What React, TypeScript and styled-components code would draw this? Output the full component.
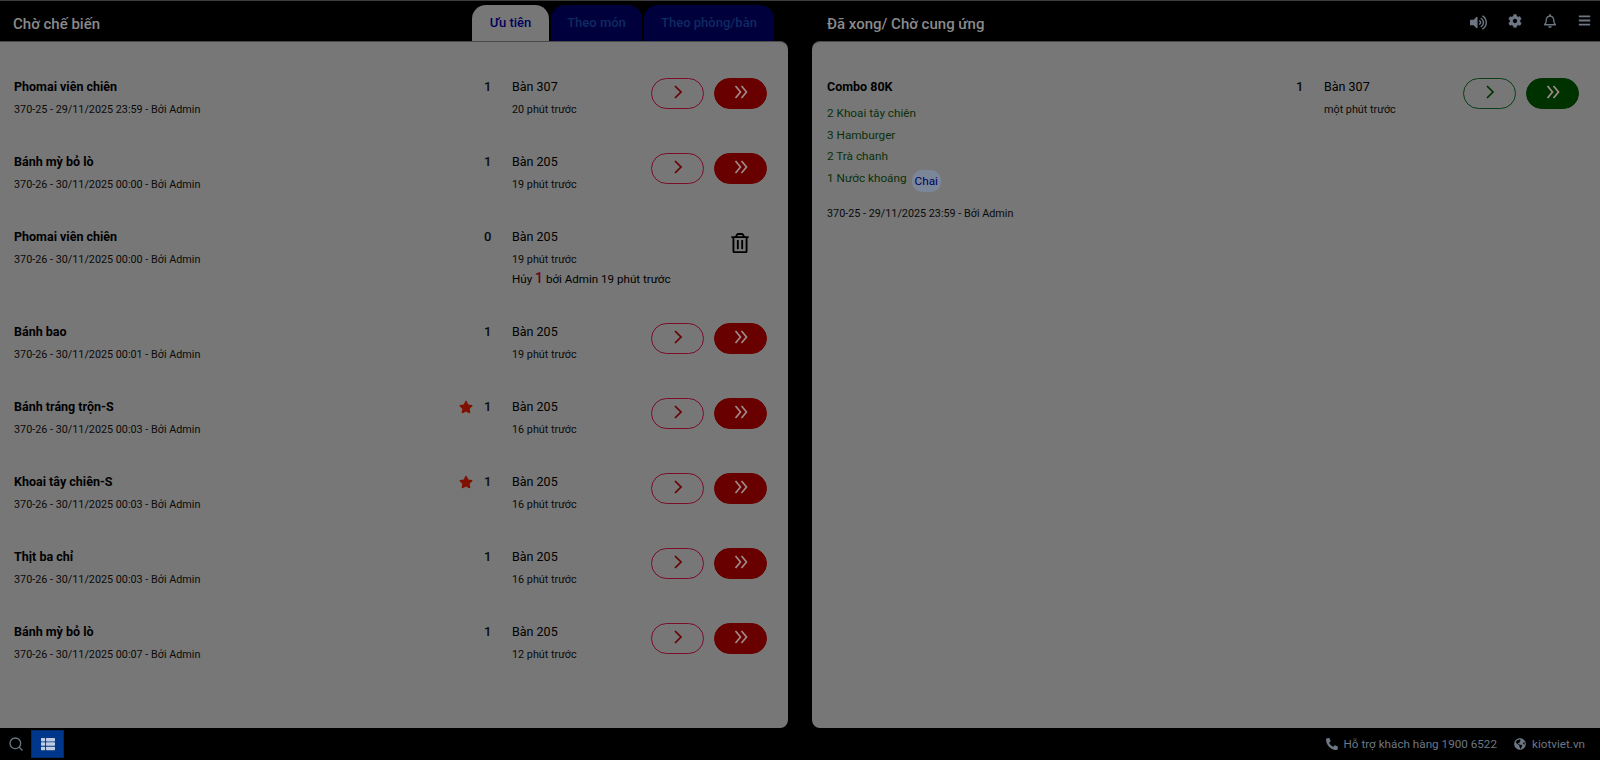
import React from 'react';
import styled, { createGlobalStyle } from 'styled-components';
import { FaVolumeUp, FaCog, FaRegBell, FaBars, FaPhoneAlt, FaGlobeAmericas, FaStar, FaRegTrashAlt, FaThList } from 'react-icons/fa';
import { FiSearch } from 'react-icons/fi';

type Item = {
  name: string;
  meta: string;
  qty: number;
  table: string;
  time: string;
  star?: boolean;
  cancelled?: boolean;
};

const items: Item[] = [
  { name: 'Phomai viên chiên', meta: '370-25 - 29/11/2025 23:59 - Bởi Admin', qty: 1, table: 'Bàn 307', time: '20 phút trước' },
  { name: 'Bánh mỳ bỏ lò', meta: '370-26 - 30/11/2025 00:00 - Bởi Admin', qty: 1, table: 'Bàn 205', time: '19 phút trước' },
  { name: 'Phomai viên chiên', meta: '370-26 - 30/11/2025 00:00 - Bởi Admin', qty: 0, table: 'Bàn 205', time: '19 phút trước', cancelled: true },
  { name: 'Bánh bao', meta: '370-26 - 30/11/2025 00:01 - Bởi Admin', qty: 1, table: 'Bàn 205', time: '19 phút trước' },
  { name: 'Bánh tráng trộn-S', meta: '370-26 - 30/11/2025 00:03 - Bởi Admin', qty: 1, table: 'Bàn 205', time: '16 phút trước', star: true },
  { name: 'Khoai tây chiên-S', meta: '370-26 - 30/11/2025 00:03 - Bởi Admin', qty: 1, table: 'Bàn 205', time: '16 phút trước', star: true },
  { name: 'Thịt ba chỉ', meta: '370-26 - 30/11/2025 00:03 - Bởi Admin', qty: 1, table: 'Bàn 205', time: '16 phút trước' },
  { name: 'Bánh mỳ bỏ lò', meta: '370-26 - 30/11/2025 00:07 - Bởi Admin', qty: 1, table: 'Bàn 205', time: '12 phút trước' },
];

const comboLines = ['2 Khoai tây chiên', '3 Hamburger', '2 Trà chanh'];

const GlobalStyle = createGlobalStyle`
  html, body {
    margin: 0;
    padding: 0;
    background: #000;
    font-family: Roboto, "Liberation Sans", sans-serif;
  }
`;

const Page = styled.div`
  width: 1600px;
  height: 760px;
  display: flex;
  flex-direction: column;
  background: #000;
  border-top: 1px solid #3c3c3c;
  box-sizing: border-box;
  overflow: hidden;
`;

const Header = styled.header`
  height: 40px;
  flex: none;
  display: grid;
  grid-template-columns: 788px 24px 1fr;
`;

const HeaderSide = styled.div`
  display: flex;
  align-items: flex-end;
  justify-content: space-between;
`;

const HeaderTitle = styled.h2<{ $inset: number }>`
  margin: 0 0 8px ${p => p.$inset}px;
  font-size: 15px;
  line-height: 32px;
  height: 25px;
  font-weight: 500;
  color: #8a8a8a;
`;

const Tabs = styled.div`
  display: flex;
  gap: 2px;
  margin-right: 14px;
`;

const Tab = styled.div<{ $active?: boolean; $width: number }>`
  width: ${p => p.$width}px;
  height: 36px;
  border-radius: 14px 14px 0 0;
  display: flex;
  align-items: center;
  justify-content: center;
  padding-bottom: 1px;
  box-sizing: border-box;
  font-size: 13px;
  font-weight: 500;
  background: ${p => (p.$active ? '#777777' : '#00003c')};
  color: ${p => (p.$active ? '#00005c' : '#0f2a62')};
`;

const HeaderIcons = styled.div`
  display: flex;
  align-self: stretch;
  align-items: flex-start;
  gap: 21px;
  padding: 13px 9px 0 0;
  color: #6d7784;
`;

const HeaderIcon = styled.span<{ $w: number }>`
  width: ${p => p.$w}px;
  display: flex;
  justify-content: center;
  svg { display: block; }
`;

const Body = styled.main`
  flex: 1;
  min-height: 0;
  display: grid;
  grid-template-columns: 788px 1fr;
  column-gap: 24px;
`;

const Panel = styled.section<{ $right?: boolean }>`
  background: #777777;
  padding: 26px 0 0;
  border-top: 1px solid #4a4a4a;
  box-sizing: border-box;
  border-radius: ${p => (p.$right ? '8px 0 0 8px' : '0 8px 8px 0')};
`;

const Row = styled.article<{ $tall?: boolean; $inset: number }>`
  height: ${p => (p.$tall ? 95 : 75)}px;
  box-sizing: border-box;
  padding: 9px 21px 0 ${p => p.$inset}px;
  display: grid;
  grid-template-columns: 1fr 24px 30px 139px 116px;
  align-items: start;
`;

const ComboRow = styled(Row)`
  height: auto;
`;

const Main = styled.div`
  min-width: 0;
`;

const Name = styled.div`
  font-size: 12.5px;
  line-height: 20px;
  font-weight: 700;
  color: #000;
`;

const Meta = styled.div<{ $gap?: number }>`
  margin-top: ${p => p.$gap ?? 3}px;
  font-size: 10.8px;
  line-height: 20px;
  color: #0a0a0a;
`;

const StarCell = styled.div`
  height: 20px;
  display: flex;
  align-items: center;
  justify-content: center;
  color: #801000;
  font-size: 14px;
  padding-right: 8px;
`;

const Qty = styled.div`
  font-size: 13px;
  line-height: 20px;
  font-weight: 500;
  color: #0a0a0a;
  padding-left: 2px;
`;

const TableCol = styled.div`
  white-space: nowrap;
`;

const TableName = styled.div`
  font-size: 12.5px;
  line-height: 20px;
  color: #000;
`;

const Cancelled = styled.div`
  font-size: 11.6px;
  line-height: 16px;
  margin-top: 0;
  color: #000;
  b {
    color: #6b0016;
    font-weight: 500;
    font-size: 14px;
  }
`;

const Actions = styled.div`
  display: flex;
  gap: 10px;
  justify-content: flex-end;
  margin-top: 1px;
`;

const RoundButton = styled.button<{ $filled?: boolean; $tone: string; $line: string }>`
  width: 53px;
  height: 31px;
  padding: 0 0 3px;
  border-radius: 16px;
  border: 1px solid ${p => p.$line};
  background: ${p => (p.$filled ? p.$tone : 'transparent')};
  color: ${p => (p.$filled ? '#a08a8a' : p.$tone)};
  display: flex;
  align-items: center;
  justify-content: center;
  svg { display: block; }
`;

const TrashSlot = styled.div`
  display: flex;
  justify-content: center;
  padding: 6px 0 0 62px;
  color: #000;
  font-size: 20px;
`;

const Combo = styled.div`
  margin-top: 6px;
`;

const ComboLine = styled.div`
  font-size: 11.75px;
  line-height: 21.7px;
  color: #0a300a;
  display: flex;
  align-items: center;
`;

const Tag = styled.span`
  margin: 2px 0 -2px 5px;
  padding: 0 3px;
  height: 22px;
  line-height: 22px;
  border-radius: 10px;
  background: #7b8799;
  color: #00005c;
`;

const Footer = styled.footer`
  height: 32px;
  flex: none;
  display: flex;
  align-items: center;
  justify-content: space-between;
  box-sizing: border-box;
  color: #6d7784;
  font-size: 11.7px;
`;

const FooterLeft = styled.div`
  display: flex;
  align-items: center;
  gap: 7px;
  padding-left: 8px;
`;

const ListButton = styled.div`
  width: 33px;
  height: 28px;
  background: #00378a;
  border: 1px solid #002a6a;
  box-sizing: border-box;
  display: flex;
  align-items: center;
  justify-content: center;
  color: #c0cce0;
  font-size: 14px;
`;

const FooterRight = styled.div`
  display: flex;
  align-items: center;
  gap: 17px;
  padding-right: 15px;
`;

const FooterLink = styled.span`
  display: flex;
  align-items: center;
  gap: 6px;
`;

const Chevron = ({ double }: { double?: boolean }) => (
  <svg width="16" height="16" viewBox="0 0 16 16" fill="none" stroke="currentColor" strokeWidth="1.7">
    {double ? (
      <>
        <polyline points="2.5,2 7.5,8 2.5,14" />
        <polyline points="8.5,2 13.5,8 8.5,14" />
      </>
    ) : (
      <polyline points="5,2 11,8 5,14" />
    )}
  </svg>
);

const Buttons = ({ tone, line }: { tone: string; line: string }) => (
  <Actions>
    <RoundButton $tone={tone} $line={line}>
      <Chevron />
    </RoundButton>
    <RoundButton $filled $tone={tone} $line={tone}>
      <Chevron double />
    </RoundButton>
  </Actions>
);

const App = () => {
  return (
    <Page>
      <GlobalStyle />
      <Header>
        <HeaderSide>
          <HeaderTitle $inset={13}>Chờ chế biến</HeaderTitle>
          <Tabs>
            <Tab $active $width={77}>Ưu tiên</Tab>
            <Tab $width={91}>Theo món</Tab>
            <Tab $width={130}>Theo phòng/bàn</Tab>
          </Tabs>
        </HeaderSide>
        <span />
        <HeaderSide>
          <HeaderTitle $inset={15}>Đã xong/ Chờ cung ứng</HeaderTitle>
          <HeaderIcons>
            <HeaderIcon $w={18}><FaVolumeUp size={17} /></HeaderIcon>
            <HeaderIcon $w={14}><FaCog size={14} /></HeaderIcon>
            <HeaderIcon $w={14}><FaRegBell size={14} /></HeaderIcon>
            <HeaderIcon $w={13}><FaBars size={13} /></HeaderIcon>
          </HeaderIcons>
        </HeaderSide>
      </Header>
      <Body>
        <Panel>
          {items.map((item, i) => (
            <Row key={i} $tall={item.cancelled} $inset={14}>
              <Main>
                <Name>{item.name}</Name>
                <Meta>{item.meta}</Meta>
              </Main>
              <StarCell>{item.star && <FaStar />}</StarCell>
              <Qty>{item.qty}</Qty>
              <TableCol>
                <TableName>{item.table}</TableName>
                <Meta>{item.time}</Meta>
                {item.cancelled && (
                  <Cancelled>Hủy <b>1</b> bởi Admin 19 phút trước</Cancelled>
                )}
              </TableCol>
              {item.cancelled ? (
                <TrashSlot><FaRegTrashAlt /></TrashSlot>
              ) : (
                <Buttons tone="#680000" line="#7c0c28" />
              )}
            </Row>
          ))}
        </Panel>
        <Panel $right>
          <ComboRow $inset={15}>
            <Main>
              <Name>Combo 80K</Name>
              <Combo>
                {comboLines.map(line => (
                  <ComboLine key={line}>{line}</ComboLine>
                ))}
                <ComboLine>1 Nước khoáng<Tag>Chai</Tag></ComboLine>
              </Combo>
              <Meta $gap={14}>370-25 - 29/11/2025 23:59 - Bởi Admin</Meta>
            </Main>
            <StarCell />
            <Qty>1</Qty>
            <TableCol>
              <TableName>Bàn 307</TableName>
              <Meta>một phút trước</Meta>
            </TableCol>
            <Buttons tone="#003200" line="#0a4018" />
          </ComboRow>
        </Panel>
      </Body>
      <Footer>
        <FooterLeft>
          <FiSearch size={16} />
          <ListButton><FaThList /></ListButton>
        </FooterLeft>
        <FooterRight>
          <FooterLink><FaPhoneAlt size={12} />Hỗ trợ khách hàng 1900 6522</FooterLink>
          <FooterLink><FaGlobeAmericas size={12} />kiotviet.vn</FooterLink>
        </FooterRight>
      </Footer>
    </Page>
  );
};

export default App;
